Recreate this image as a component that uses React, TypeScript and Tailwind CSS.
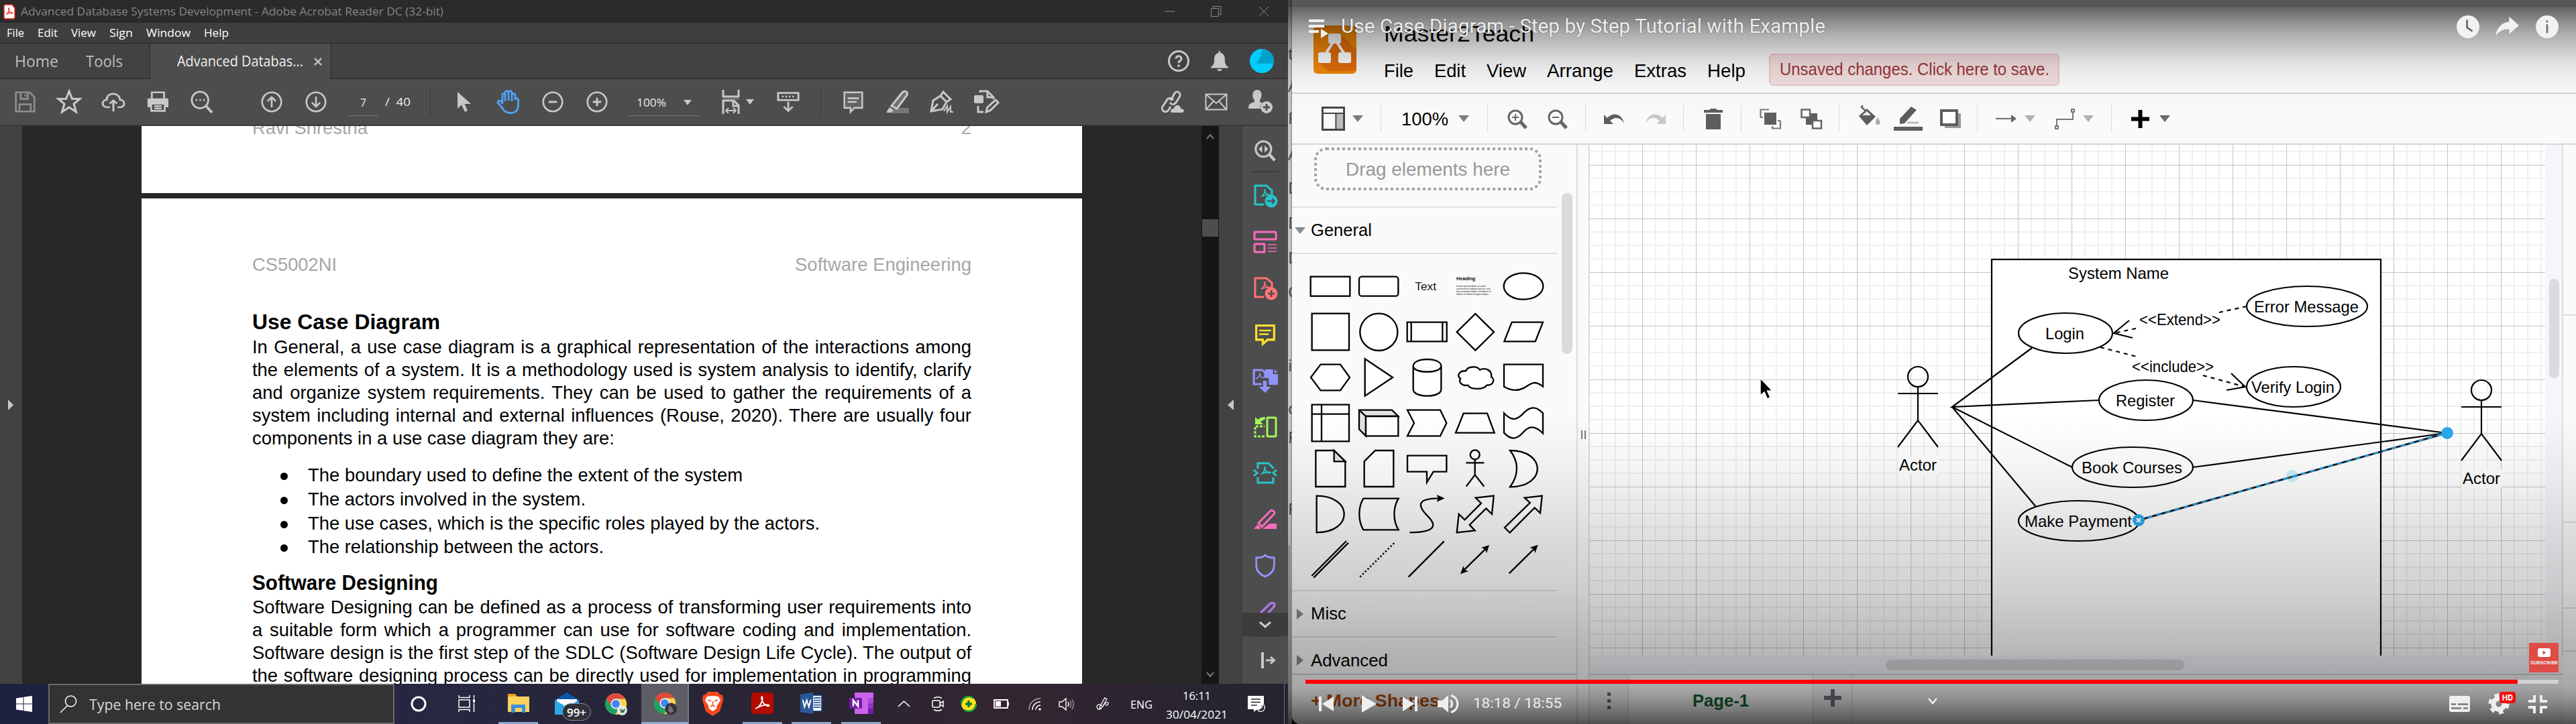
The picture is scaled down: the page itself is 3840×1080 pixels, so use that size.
import React, { useLayoutEffect, useRef, useState } from "react";

/* Text squeezed or stretched horizontally so that it fills a known width. */
function Fit({ w, className = "", children }: { w: number; className?: string; children: string }) {
  const ref = useRef<HTMLSpanElement>(null);
  const [k, setK] = useState(1);
  useLayoutEffect(() => {
    if (ref.current && ref.current.offsetWidth) setK(w / ref.current.getBoundingClientRect().width);
  }, []);
  return (
    <span className={"block shrink-0 " + className} style={{ width: w }}>
      <span ref={ref} className="inline-block origin-left whitespace-nowrap" style={{ transform: `scaleX(${k})` }}>
        {children}
      </span>
    </span>
  );
}

type P = { className?: string; box?: string; children?: React.ReactNode };
const Svg = ({ className = "", box = "0 0 36 36", children }: P) => (
  <svg viewBox={box} className={"block shrink-0 overflow-visible " + className} fill="none" stroke="#c8c8c8" strokeWidth={3} preserveAspectRatio="none">
    {children}
  </svg>
);

const Cell = ({ children }: P) => <div className="flex h-full w-[66px] shrink-0 items-center justify-center">{children}</div>;

/* ------------------------------ Acrobat ------------------------------ */

function TitleBar() {
  return (
    <div className="flex h-[34px] shrink-0 items-center bg-[#2b2b2b] pl-[5px]">
      <Svg className="h-[23px] w-[18px]" box="0 0 18 23">
        <path d="M1 3 Q1 1 3 1 H13 L17 6 V20 Q17 22 15 22 H3 Q1 22 1 20Z" fill="#fff" stroke="#f4281b" strokeWidth="1.4" />
        <path d="M4 16 C7 14 9 9 8.5 6.500 C8 5 7 7 8.500 10 C10 13 13 15 14 13.500 C14 12 8 13 5 15Z" stroke="#f4281b" strokeWidth="1.2" />
      </Svg>
      <Fit w={630} className="ml-2 text-[17px] text-[#868686]">Advanced Database Systems Development - Adobe Acrobat Reader DC (32-bit)</Fit>
      <Svg className="ml-[1075px] h-4 w-4" box="0 0 16 16"><path d="M0 8H15" stroke="#8a8a8a" strokeWidth="1" /></Svg>
      <Svg className="ml-[53px] h-4 w-4" box="0 0 16 16"><path d="M.5 3.500H11.500V15.500H.5ZM3.500 3.500V.5H15V12.500H11.500" stroke="#8a8a8a" strokeWidth="1" /></Svg>
      <Svg className="ml-[55px] h-4 w-4" box="0 0 16 16"><path d="M1 1L15 15M15 1L1 15" stroke="#8a8a8a" strokeWidth="1" /></Svg>
    </div>
  );
}

function MenuBar() {
  return (
    <div className="flex h-[31px] shrink-0 items-center gap-5 border-b border-[#272727] bg-[#3e3e3e] pl-2.5 text-[17px] text-white">
      <Fit w={26}>File</Fit>
      <Fit w={30}>Edit</Fit>
      <Fit w={37}>View</Fit>
      <Fit w={35}>Sign</Fit>
      <Fit w={66}>Window</Fit>
      <Fit w={37}>Help</Fit>
    </div>
  );
}

function TabBar() {
  return (
    <div className="flex h-[53px] shrink-0 bg-[#424242]">
      <div className="flex w-56 shrink-0 items-center border-r border-b border-[#2a2a2a] pl-[22px] text-[23px] text-[#bdbdbd]">
        <Fit w={65}>Home</Fit>
        <Fit w={55} className="ml-[41px]">Tools</Fit>
      </div>
      <div className="flex w-[269px] shrink-0 items-center bg-[#4d4d4d] pl-10 text-[21px] text-[#efefef]">
        <Fit w={188}>Advanced Databas...</Fit>
        <Svg className="ml-[17px] h-2.5 w-2.5" box="0 0 10 10"><path d="M0 0L10 10M10 0L0 10" strokeWidth="2.4" /></Svg>
      </div>
      <div className="flex flex-1 items-center border-b border-l border-[#2a2a2a] pl-[1247px]">
        <Svg className="h-8 w-8" box="0 0 32 32">
          <circle cx="16" cy="16" r="14.500" />
          <path d="M12 12.500C12 7.500 20 7.500 20 12.500C20 16 16 15.500 16 19M16 21.500V25" />
        </Svg>
        <Svg className="ml-8 h-[30px] w-[26px]" box="0 0 26 30">
          <path d="M13 0C11.500 0 11.500 3 11.500 3C6 4 5 9 5 14C5 20 3 22 0 24V25.500H26V24C23 22 21 20 21 14C21 9 20 4 14.500 3C14.500 3 14.500 0 13 0ZM9.500 27H16.500C16 31 10 31 9.500 27Z" fill="#c8c8c8" stroke="none" />
        </Svg>
        <Svg className="ml-8 h-9 w-9">
          <circle cx="18" cy="18" r="18" fill="#00ccff" stroke="none" />
          <path d="M19 0A18 18 0 0 1 35 24C32 20 27 22 11 22C11 16 18 14 17 6Z" fill="#00a0cb" stroke="none" />
        </Svg>
      </div>
    </div>
  );
}

const Caret = ({ className = "" }: P) => <Svg className={"h-2 w-3 " + className} box="0 0 12 8"><path d="M0 0H12L6 8Z" fill="#c8c8c8" stroke="none" /></Svg>;

function AcroToolbar() {
  return (
    <div className="flex h-[70px] shrink-0 items-center border-b-2 border-[#3a3a3a] bg-[#4d4d4d] pl-1 text-[17px] text-[#eeeeee]">
      <Cell><Svg className="h-8 w-8" ><g stroke="#8d8d8d"><path d="M3 2H26L34 10V34H3ZM11 2V13H23V2M19 5V9M9 34V22H28V34" /></g></Svg></Cell>
      <Cell><Svg className="h-9 w-9"><path d="M18 2L22.500 13.500H34L25 21L28.500 33L18 26L7.500 33L11 21L2 13.500H13.500Z" /></Svg></Cell>
      <Cell><Svg className="h-8 w-9"><path d="M13 27H9C0 27 0 15 8 14.500C8 1 27 1 28 14.500C36 15 36 27 28 27H24M18 34V16M12.500 21L18 15.500L23.500 21" strokeWidth="3" /></Svg></Cell>
      <Cell><Svg className="h-8 w-[33px]"><path d="M1 14Q1 12 3 12H33Q35 12 35 14V27H29V21H7V27H1Z" fill="#c8c8c8" stroke="none" /><path d="M8 12V2H28V12M7 21H29V33H7ZM12 25H24M12 29H24" /></Svg></Cell>
      <Cell><Svg className="h-[34px] w-[34px]"><circle cx="15" cy="15" r="13" /><path d="M24 24L34 35" strokeWidth="4" /><path d="M8 15H10.500M14 15H16.500M20 15H22.500" /></Svg></Cell>
      <div className="w-[38px] shrink-0" />
      <Cell><Svg className="h-8 w-8"><circle cx="18" cy="18" r="16" /><path d="M18 27V10M11 17L18 10L25 17" strokeWidth="3" /></Svg></Cell>
      <Cell><Svg className="h-8 w-8"><circle cx="18" cy="18" r="16" /><path d="M18 9V26M11 19L18 26L25 19" strokeWidth="3" /></Svg></Cell>
      <div className="ml-[16px] mt-0.5 flex h-10 w-[43px] items-center justify-center border-b border-[#7a7a7a]"><Fit w={9}>7</Fit></div>
      <Fit w={38} className="ml-[11px]">/&nbsp; 40</Fit>
      <div className="ml-[29px] h-[42px] w-px bg-[#383838]" />
      <div className="w-[17px] shrink-0" />
      <Cell><Svg className="h-[30px] w-5" box="0 0 20 30"><path d="M0 0V25L6 19.500L11 30L15 28L10.500 18H20Z" fill="#c8c8c8" stroke="none" /></Svg></Cell>
      <Cell><Svg className="h-9 w-9"><path d="M9 21V8C9 5 13 5 13 8V17V4C13 1 18 1 18 4V16V4C18 1 23 1 23 4V17V8C23 5 28 5 28 8V15C28 12 32.500 12 32.500 15V24C32 31 28 34.500 21 34.500C14 34.500 11 31 8 26L2 19C2 15 6 15 9 20" stroke="#4da4f7" strokeWidth="2.8" /></Svg></Cell>
      <Cell><Svg className="h-8 w-8"><circle cx="18" cy="18" r="16" /><path d="M11 18H25" strokeWidth="3.4" /></Svg></Cell>
      <Cell><Svg className="h-8 w-8"><circle cx="18" cy="18" r="16" /><path d="M11 18H25M18 11V25" strokeWidth="3.2" /></Svg></Cell>
      <div className="ml-[14px] mt-0.5 flex h-10 w-[105px] items-center border-b border-[#7a7a7a] pl-3">
        <Fit w={44}>100%</Fit>
        <Caret className="ml-[26px]" />
      </div>
      <Svg className="ml-[34px] h-9 w-[26px]" box="0 0 26 36"><path d="M2 0V10H25V0M2 36V16H18L25 23V36M17 16V24H25" /><path d="M2 13H25" stroke="#777" /><path d="M6 31H21M10 27L6 31L10 35M17 27L21 31L17 35" strokeWidth="1.800" /></Svg>
      <Caret className="ml-2.5" />
      <Svg className="ml-[34px] h-8 w-[34px]"><rect x="2" y="3" width="32" height="12" /><path d="M8 9H28" strokeDasharray="2.500 3" /><path d="M18 18V33M11 26L18 33L25 26" strokeWidth="3" /></Svg>
      <div className="ml-[31px] h-[42px] w-px bg-[#383838]" />
      <div className="w-[15px] shrink-0" />
      <Cell><Svg className="h-8 w-[30px]"><path d="M2 2H34V28H20L13 35V28H2Z" fill="#636363" /><path d="M8 12H28M8 18H24" /></Svg></Cell>
      <Cell><Svg className="h-9 w-9"><path d="M14 27H35V35H8Z" fill="#777" stroke="none" /><path d="M9 24L25 4C28 0 34 3 32 8L17 28L9 24Z" fill="#707070" /><path d="M1 34L6 26L12 30L9 34Z" fill="#c8c8c8" stroke="none" /></Svg></Cell>
      <Cell><Svg className="h-9 w-9"><path d="M2 32L5 16L16 9L25 18L19 29ZM2 32L12 21M16 9L20 3L31 14L25 18" /><path d="M21 32L26 24V33L31 25V33H35" strokeWidth="2" /></Svg></Cell>
      <Cell><Svg className="h-9 w-9"><path d="M9 4V2H20L29 11V14M20 2V11H29" /><rect x="0" y="8" width="14" height="12" rx="2" fill="#c8c8c8" stroke="none" /><path d="M6 24V33H14M18 33L20 26L32 15L36 19L24 31Z" /></Svg></Cell>
      <div className="w-[211px] shrink-0" />
      <Cell><Svg className="h-9 w-9"><path d="M16 16L22 5C26 0 33 5 29 11L24 19C21 23 17 22 15 19M20 15C17 11 12 12 10 16L4 25C1 31 9 36 13 30L16 25" strokeWidth="3" /><path d="M16 33C16 28 20 28 21 28C22 21 31 22 31 28C37 28 37 34 33 34H18Z" fill="#c8c8c8" stroke="none" /></Svg></Cell>
      <Cell><Svg className="h-[26px] w-[34px]" box="0 0 34 26"><path d="M1.500 1.500H32.500V24.500H1.500ZM1.500 1.500L17 15L32.500 1.500M1.500 24.500L13 12M32.500 24.500L21 12" strokeWidth="2" /></Svg></Cell>
      <Cell><Svg className="h-9 w-9"><path d="M13 0C22 0 20 13 17 15V18C19 19 21 20 21 20C17 23 17 26 18 28H0C0 20 4 20 9 18V15C5 12 5 0 13 0Z" fill="#c8c8c8" stroke="none" /><circle cx="27" cy="26" r="9" fill="#c8c8c8" stroke="none" /><path d="M22 26H32M27 21V31" stroke="#4d4d4d" /></Svg></Cell>
    </div>
  );
}

const Line = ({ children }: P) => <div className="h-[34px] whitespace-nowrap [text-align-last:justify]">{children}</div>;
const Bullet = ({ w, h, children }: { w: number; h: string; children: string }) => (
  <li className={"flex " + h}>
    <span className="ml-[42px] mt-[13px] h-[11px] w-[11px] rounded-full bg-black" />
    <Fit w={w} className="ml-[30px]">{children}</Fit>
  </li>
);

function Pages() {
  return (
    <div className="flex h-full w-[1402px] flex-col overflow-hidden font-['Liberation_Sans',sans-serif] text-[27.4px] leading-[34px] text-black">
      <div className="h-[100px] shrink-0 overflow-hidden bg-white px-[165px]">
        <div className="mt-[-14.5px] flex justify-between text-[#a6a6a6]">
          <Fit w={172}>Ravi Shrestha</Fit>
          <span>2</span>
        </div>
      </div>
      <div className="mt-2 flex-1 bg-white px-[165px] pt-[82px]">
        <div className="flex justify-between text-[#a6a6a6]">
          <Fit w={126}>CS5002NI</Fit>
          <Fit w={263}>Software Engineering</Fit>
        </div>
        <Fit w={280} className="mt-[52px] text-[31px] font-bold">Use Case Diagram</Fit>
        <div className="mt-[3px] h-[170px]">
          <Line>In General, a use case diagram is a graphical representation of the interactions among</Line>
          <Line>the elements of a system. It is a methodology used is system analysis to identify, clarify</Line>
          <Line>and organize system requirements. They can be used to gather the requirements of a</Line>
          <Line>system including internal and external influences (Rouse, 2020). There are usually four</Line>
          <Fit w={540}>components in a use case diagram they are:</Fit>
        </div>
        <ul className="mt-[21px]">
          <Bullet w={648} h="h-9">The boundary used to define the extent of the system</Bullet>
          <Bullet w={414} h="h-9">The actors involved in the system.</Bullet>
          <Bullet w={763} h="h-[35px]">The use cases, which is the specific roles played by the actors.</Bullet>
          <Bullet w={441} h="h-[34px]">The relationship between the actors.</Bullet>
        </ul>
        <Fit w={277} className="mt-[20px] text-[31px] font-bold">Software Designing</Fit>
        <div className="mt-[2px]">
          <Line>Software Designing can be defined as a process of transforming user requirements into</Line>
          <Line>a suitable form which a programmer can use for software coding and implementation.</Line>
          <Line>Software design is the first step of the SDLC (Software Design Life Cycle). The output of</Line>
          <Line>the software designing process can be directly used for implementation in programming</Line>
        </div>
      </div>
    </div>
  );
}

const Tool = ({ children }: P) => <div className="flex h-[69px] shrink-0 items-center justify-center">{children}</div>;
const pdfGlyph = "M12 19C16 17 18 12 18 9C17 8 16 10 19 14C22 18 26 18 26 17C25 15 17 17 12 19Z";

function ToolPane() {
  return (
    <div className="flex w-[69px] shrink-0 flex-col border-l border-[#3a3a3a] bg-[#4d4d4d]">
      <div className="flex h-[67px] shrink-0 items-center justify-center pt-1.5">
        <Svg className="h-8 w-8"><circle cx="15" cy="15" r="13" strokeWidth="3.500" /><path d="M24 23L34 34" strokeWidth="5" /><path d="M13 9V21L7 15ZM17 9V21L23 15Z" fill="#c8c8c8" stroke="none" /></Svg>
      </div>
      <div className="mx-[13px] h-0.5 shrink-0 bg-[#3d3d3d]" />
      <div className="flex h-[657px] shrink-0 flex-col overflow-hidden">
        <Tool><Svg className="h-9 w-9"><g stroke="#26c5cb" strokeWidth="3"><path d="M16 31H3V3H20L28 10V17" /><path d={pdfGlyph} strokeWidth="1.600" /><circle cx="27" cy="26" r="9.500" fill="#26c5cb" stroke="none" /><path d="M21 26H32M28 22L32 26L28 30" stroke="#4d4d4d" strokeWidth="2" /></g></Svg></Tool>
        <Tool><Svg className="h-9 w-9"><g stroke="#fa6cbb" strokeWidth="3"><rect x="2" y="3" width="32" height="11" rx="1" /><rect x="2" y="21" width="15" height="12" rx="1" /><path d="M22 22H35M22 27H35M22 32H35" strokeWidth="1.600" /></g></Svg></Tool>
        <Tool><Svg className="h-9 w-9"><g stroke="#ff7477" strokeWidth="3"><path d="M16 31H3V3H20L28 10V17" /><path d={pdfGlyph} strokeWidth="1.600" /><circle cx="27" cy="26" r="9.500" fill="#ff7477" stroke="none" /><path d="M22 26H32M27 21V31" stroke="#4d4d4d" strokeWidth="2.500" /></g></Svg></Tool>
        <Tool><Svg className="h-[33px] w-8"><g stroke="#ffde2e" strokeWidth="3.600"><path d="M3 4H33V27H22L14 34V27H3Z" /><path d="M8 12H28M8 18H24" strokeWidth="2.500" /></g></Svg></Tool>
        <Tool><Svg className="h-9 w-[38px]"><g stroke="#9193fb" strokeWidth="3"><path d="M13 23H2V2H14L18 6V13" /><path d="M5 15C9 13 11 9 11 7C10 6 10 9 12 12C14 14 17 14 17 12" strokeWidth="1.400" /><path d="M18 1H29V8H36V24H23V14H18ZM31 1L36 6H31ZM15 18H20V27H26L18 36L9 27H15Z" fill="#9193fb" stroke="none" /></g></Svg></Tool>
        <Tool><Svg className="h-9 w-9"><g stroke="#9ff857" strokeWidth="3"><rect x="21" y="4" width="13" height="28" rx="1" /><path d="M17 32H3V17H17" strokeDasharray="4 2" /><path d="M3 3V14H15L11 10L18 6V3C13 3 10 4 7 7Z" fill="#9ff857" stroke="none" /></g></Svg></Tool>
        <Tool><Svg className="h-9 w-9"><g stroke="#26c5cb" strokeWidth="3"><path d="M7 11V3H23L30 10V11M7 24V32H30V24" /><path d={pdfGlyph} strokeWidth="1.800" /><path d="M1 13L6 17.500L1 22M35 13L30 17.500L35 22" /></g></Svg></Tool>
        <Tool><Svg className="h-9 w-9"><g stroke="#fa6cbb" strokeWidth="3"><path d="M8 23L26 5C29 3 34 7 31 10L13 29Z" /><path d="M14 32L25 24H35V32ZM1 32L7 25L11 31V32Z" fill="#fa6cbb" stroke="none" /></g></Svg></Tool>
        <Tool><Svg className="h-9 w-8"><path d="M18 2C15 5 8 6 3 6V17C3 26 9 31 18 34C27 31 33 26 33 17V6C28 6 21 5 18 2Z" stroke="#9193fb" strokeWidth="3" /></Svg></Tool>
        <Tool><Svg className="h-9 w-9"><path d="M6 24L26 5C29 3 34 6 31 10L14 29" stroke="#b27bee" strokeWidth="3" /></Svg></Tool>
      </div>
      <div className="flex h-[35px] shrink-0 items-center justify-center bg-[#3c3c3c]"><Svg className="h-2.5 w-[18px]" box="0 0 18 10"><path d="M1 1L9 8L17 1" /></Svg></div>
      <div className="mx-[13px] h-px bg-[#3d3d3d]" />
      <div className="flex flex-1 items-center justify-center pl-2"><Svg className="h-6 w-[21px]" box="0 0 21 24"><path d="M2 0V24" strokeWidth="4" /><path d="M7 12H19M14 7L19.500 12L14 17" /></Svg></div>
    </div>
  );
}

function Acrobat() {
  return (
    <div className="flex h-[1020px] flex-col overflow-hidden">
      <TitleBar />
      <MenuBar />
      <TabBar />
      <AcroToolbar />
      <div className="flex min-h-0 flex-1 bg-[#282828]">
        <div className="flex w-[33px] shrink-0 items-center bg-[#424242] pl-3 pt-0"><Svg className="h-4 w-2" box="0 0 8 16"><path d="M0 0L8 8L0 16Z" fill="#c8c8c8" stroke="none" /></Svg></div>
        <div className="w-[178px] shrink-0" />
        <Pages />
        <div className="w-[178px] shrink-0" />
        <div className="flex w-[26px] shrink-0 flex-col items-center bg-[#161616]">
          <Svg className="mt-3 h-2 w-2.5" box="0 0 10 8"><path d="M0 7L5 1L10 7" stroke="#777" strokeWidth="2" /></Svg>
          <div className="mt-[119px] h-[26px] w-6 bg-[#4d4d4d]" />
          <Svg className="mt-auto mb-2.5 h-2 w-2.5" box="0 0 10 8"><path d="M0 1L5 7L10 1" stroke="#777" strokeWidth="2" /></Svg>
        </div>
        <div className="flex w-[34px] shrink-0 items-center justify-center bg-[#424242]"><Svg className="h-4 w-[9px]" box="0 0 9 16"><path d="M9 0L0 8L9 16Z" fill="#c8c8c8" stroke="none" /></Svg></div>
        <ToolPane />
      </div>
    </div>
  );
}

/* ------------------------------ Taskbar ------------------------------ */

const App60 = ({ className = "", open, children }: P & { open?: boolean }) => (
  <div className={"flex h-full w-[59px] shrink-0 items-center justify-center border-b-[3px] " + (open ? "border-[#8fa9cf] " : "border-transparent ") + className}>{children}</div>
);

function Chrome({ children }: P) {
  return (
    <Svg className="h-[34px] w-[34px]">
      <g stroke="none">
        <circle cx="18" cy="18" r="17" fill="#1fa463" />
        <path d="M3 10A17 17 0 0 1 33 10H18L11 21Z" fill="#e04a3f" />
        <path d="M18 10H33A17 17 0 0 1 17 35L25 22Z" fill="#fdd045" />
        <circle cx="18" cy="18" r="8" fill="#fff" />
        <circle cx="18" cy="18" r="6.400" fill="#4285f4" />
        {children}
      </g>
    </Svg>
  );
}

function Taskbar() {
  return (
    <div className="flex h-[60px] items-center bg-[linear-gradient(90deg,#1d2140_0px,#262741_640px,#282537_1000px,#2a2531_1250px,#332530_1500px,#242431_1920px)] font-['Open_Sans',sans-serif] text-white">
      <Svg className="ml-6 h-6 w-6" box="0 0 24 24"><path d="M0 3.500L10.500 2V11.500H0ZM11.500 1.800L24 0V11.500H11.500ZM0 12.500H10.500V22L0 20.500ZM11.500 12.500H24V24L11.500 22.200Z" fill="#fff" stroke="none" /></Svg>
      <div className="ml-6 flex h-full w-[516px] shrink-0 items-center border-2 border-[#6a6a6c] bg-[#333333] pl-4">
        <Svg className="h-[26px] w-6" box="0 0 24 26"><circle cx="15.500" cy="9" r="8" stroke="#fff" strokeWidth="1.500" /><path d="M10.500 15.500L0 26" stroke="#fff" strokeWidth="1.500" /></Svg>
        <Fit w={196} className="ml-[19px] mt-0.5 text-[21.5px] text-[#d8d8d8]">Type here to search</Fit>
      </div>
      <Svg className="ml-6 h-6 w-6" box="0 0 24 24"><circle cx="12" cy="12" r="10" stroke="#fff" strokeWidth="3" /></Svg>
      <Svg className="ml-[47px] h-[26px] w-[26px]" box="0 0 26 26"><g stroke="#fff" strokeWidth="1.500"><rect x="1" y="7" width="16" height="11" /><path d="M1 0V3.500H17V0M1 25V21.500H17V25M23.500 0V5M23.500 12V25" /><path d="M23.500 6V11" strokeWidth="3" /></g></Svg>
      <App60 open className="ml-[34px]"><Svg className="h-7 w-8" box="0 0 32 28"><g stroke="none"><path d="M0 0H11L14 4H32V26H0Z" fill="#e3a413" /><path d="M0 4H32V27H0Z" fill="#fdd35d" /><path d="M5 16H26V28H21V21H11V28H5Z" fill="#3b8fdc" /></g></Svg></App60>
      <div className="relative ml-[25px] h-full w-[54px] shrink-0">
        <Svg className="mt-[13px] h-[33px] w-9" box="0 0 36 33"><g stroke="none"><path d="M0 11L18 0L36 11V18H0Z" fill="#0a57a8" /><path d="M3 10H33V20H3Z" fill="#fff" /><path d="M0 11L18 22L36 11V33H0Z" fill="#28a8ea" /></g></Svg>
        <span className="absolute left-[11px] top-[29px] flex h-[26px] w-[43px] items-center justify-center rounded-full border border-[#8a8a8a] bg-[#303039] text-[17px] font-semibold leading-none">99+</span>
      </div>
      <div className="ml-5"><Chrome><circle cx="28" cy="28" r="8" fill="#e4ebe6" /><path d="M24 25L28 29L27 24L29 28L33 25L31 32H26Z" fill="#3f6b50" /></Chrome></div>
      <div className="ml-[21px] flex h-full w-[71px] shrink-0 items-center justify-center border-r-2 border-b-[3px] border-r-[#777985] border-b-[#8fa9cf] bg-[#5c5d65]"><Chrome><circle cx="28" cy="27" r="9.500" fill="#35323a" /><path d="M25 21L29 24L32 31L27 34L23 30Z" fill="#77706f" /></Chrome></div>
      <Svg className="ml-5 h-9 w-[31px]" box="0 0 31 36"><path d="M8 0H23L26 4L30 5L31 12L26 29L15.500 36L5 29L0 12L1 5L5 4Z" fill="#f9481c" stroke="none" /><path d="M15.500 6L24 7L27 13L22 20L21 25L15.500 29L10 25L9 20L4 13L7 7Z" fill="#fff" stroke="none" /><path d="M8 12L13 14M23 12L18 14M15.500 14V20L12 22M15.500 20L19 22" stroke="#f9481c" strokeWidth="1.500" /></Svg>
      <App60 open className="ml-[29px]"><Svg className="h-8 w-[33px]"><rect width="36" height="36" rx="5" fill="#b30b00" stroke="none" /><path d="M7 27C13 25 19 15 18 8C17 5 15 9 18 15C21 21 28 25 29 22C29 19 16 21 9 26Z" stroke="#fff" strokeWidth="2" /></Svg></App60>
      <App60 open className="ml-3.5"><Svg className="h-8 w-[33px]"><g stroke="none"><path d="M18 5H35V31H18Z" fill="#fff" /><path d="M0 3L21 0V36L0 33Z" fill="#2b579a" /></g><path d="M22 9H33M22 13H33M22 17H33M22 21H33M22 25H33" stroke="#2b579a" strokeWidth="2" /><path d="M18 5H34.500V31H18" stroke="#2b579a" strokeWidth="1.500" /><path d="M4 12L7 24L10.500 13L14 24L17 12" stroke="#fff" strokeWidth="2.200" /></Svg></App60>
      <App60 open className="ml-[15px]"><Svg className="h-8 w-9"><g stroke="none"><path d="M8 0H36V36H8Z" fill="#ca64ea" /><path d="M28 9H36V18H28Z" fill="#ae4bd5" /><path d="M28 18H36V27H28Z" fill="#9332bf" /><path d="M28 27H36V36H28Z" fill="#7719aa" /><rect y="9" width="19" height="18" rx="1" fill="#7719aa" /></g><path d="M6 23V13L13 23V13" stroke="#fff" strokeWidth="2.500" /></Svg></App60>
      <Svg className="ml-[25px] h-2.5 w-[19px]" box="0 0 19 10"><path d="M1 9L9.500 1L18 9" stroke="#fff" strokeWidth="1.600" /></Svg>
      <Svg className="ml-8 h-[22px] w-[18px]" box="0 0 18 22"><g stroke="#fff" strokeWidth="1.500"><rect x="1" y="6" width="11" height="10" rx="1.500" /><path d="M12 10L17 7V15L12 12M3 2.500Q9 -1 15 2.500M3 19.500Q9 23 15 19.500" /></g></Svg>
      <Svg className="ml-6 h-6 w-[26px]" box="0 0 26 24"><circle cx="13" cy="12" r="11" fill="#ffe11a" stroke="#149a3c" strokeWidth="2.500" strokeDasharray="24 11" /><path d="M13 7V17M8 12H18" stroke="#0b7a2d" strokeWidth="3.500" /></Svg>
      <Svg className="ml-6 h-3.5 w-[24px]" box="0 0 24 14"><path d="M1 1H21V13H1ZM22 4V10" stroke="#fff" strokeWidth="1.800" /><path d="M3 3H11V11H3Z" fill="#fff" stroke="none" /></Svg>
      <Svg className="ml-7 h-[19px] w-[19px]" box="0 0 19 19"><g stroke="#fff" strokeWidth="1.500"><path d="M1 18C1 8 8 1 18 1" opacity=".6" /><path d="M6 18C6 11 11 6 18 6M11 18C11 14 14 11 18 11" /></g><circle cx="17" cy="17" r="1.800" fill="#fff" stroke="none" /></Svg>
      <Svg className="ml-[26px] h-[19px] w-6" box="0 0 24 19"><g stroke="#fff" strokeWidth="1.400"><path d="M1 6H5L11 1V18L5 13H1ZM14 6Q16 9.500 14 13" /><path d="M17 4Q20 9.500 17 15M20 2Q24.500 9.500 20 17" opacity=".5" /></g></Svg>
      <Svg className="ml-8 h-5 w-5" box="0 0 20 20"><path d="M6 13L13 1L16 3L9 15L5 18L6 13M9 13C3 8 0 13 2 17C5 20 9 16 11 12C14 8 19 6 18 10C17 13 14 12 14 11" stroke="#fff" strokeWidth="1.300" /></Svg>
      <Fit w={33} className="ml-[31px] mt-0.5 text-[17px]">ENG</Fit>
      <div className="ml-5 mt-1 flex w-[92px] shrink-0 flex-col items-center text-[17px] leading-7">
        <Fit w={42}>16:11</Fit>
        <Fit w={92}>30/04/2021</Fit>
      </div>
      <Svg className="ml-[30px] h-6 w-[25px]" box="0 0 25 24"><path d="M0 0H24V12A6 6 0 0 0 20 20H14L9 24V20H0Z" fill="#fff" stroke="none" /><path d="M5 5H19M5 9.500H19M5 14H14" stroke="#272430" strokeWidth="1.600" /><path d="M22 12A6 6 0 1 1 14 20A7 7 0 0 0 22 12Z" fill="#272430" stroke="#fff" strokeWidth="1.300" /></Svg>
      <div className="ml-[29px] h-full w-px bg-[#6f6d78]" />
    </div>
  );
}

/* ------------------------------ draw.io ------------------------------ */

const Down = ({ className = "", color = "#7d7d7d" }: P & { color?: string }) => <Svg className={"h-2.5 w-4 " + className} box="0 0 16 10"><path d="M0 0H16L8 10Z" fill={color} stroke="none" /></Svg>;
const Sep = ({ className = "" }: P) => <div className={"h-10 w-px shrink-0 bg-[#dadada] " + className} />;

function DrawHeader() {
  return (
    <div className="flex h-[140px] shrink-0 border-b-2 border-[#d2d3d8] bg-[#fafafa] pl-8 text-black">
      <Svg className="mt-[38px] h-[72px] w-16" box="0 0 64 72">
        <g stroke="none"><rect width="64" height="72" rx="6" fill="#f08705" /><path d="M38 10L64 36V66Q64 68 60 68H22L8 56L22 30Z" fill="#df6c0c" /></g>
        <path d="M31 22L17 44M33 22L47 44" stroke="#fff" strokeWidth="4" />
        <g fill="#fff" stroke="none"><rect x="22" y="12" width="19" height="15" rx="3" /><rect x="7" y="40" width="19" height="16" rx="3" /><rect x="37" y="40" width="19" height="16" rx="3" /></g>
      </Svg>
      <div className="ml-[41px] pt-[30px]">
        <Fit w={224} className="h-10 text-[34px] leading-10">Master2Teach</Fit>
        <div className="mt-2.5 flex h-12 items-center gap-[31px] text-[28px]">
          <Fit w={44} className="pt-1">File</Fit>
          <Fit w={47} className="pt-1">Edit</Fit>
          <Fit w={59} className="pt-1">View</Fit>
          <Fit w={99} className="pt-1">Arrange</Fit>
          <Fit w={78} className="pt-1">Extras</Fit>
          <Fit w={57} className="pt-1">Help</Fit>
          <div className="ml-1 flex h-12 w-[433px] items-center rounded-md border-2 border-[#eec5cc] bg-[#f2dede] pl-3.5 text-[25px] text-[#983638]">
            <Fit w={402}>Unsaved changes. Click here to save.</Fit>
          </div>
        </div>
      </div>
    </div>
  );
}

function DrawToolbar() {
  return (
    <div className="flex h-[76px] shrink-0 items-center border-b-2 border-[#d5d6dc] bg-[#fafafa]">
      <Svg className="ml-11 h-9 w-[35px]"><g stroke="#444"><path d="M22 11H34V34H22Z" fill="#bbb" stroke="none" /><rect x="1.500" y="1.500" width="33" height="33" /><path d="M1.500 10H34.500M22 10V34" strokeWidth="2" /></g></Svg>
      <Down className="ml-[11px]" />
      <Sep className="ml-[26px]" />
      <Fit w={70} className="ml-[30px] mt-0.5 text-[27px] text-black">100%</Fit>
      <Down className="ml-[15px]" />
      <Sep className="ml-[27px]" />
      <Svg className="ml-[29px] h-[29px] w-[30px]" box="0 0 30 29"><g stroke="#666"><circle cx="12" cy="12" r="10" /><path d="M19 18L28 28" strokeWidth="5" /><path d="M7 12H17M12 7V17" strokeWidth="2" /></g></Svg>
      <Svg className="ml-[30px] h-[29px] w-[30px]" box="0 0 30 29"><g stroke="#666"><circle cx="12" cy="12" r="10" /><path d="M19 18L28 28" strokeWidth="5" /><path d="M7 12H17" strokeWidth="2" /></g></Svg>
      <Sep className="ml-[26px]" />
      <Svg className="ml-[27px] h-[15px] w-[31px]" box="0 0 31 15"><path d="M0 1V15H14L9 10C18 3 25 6 30 14C27 0 14 -4 5 6Z" fill="#5e5e5e" stroke="none" /></Svg>
      <Svg className="ml-[30px] h-[15px] w-[31px]" box="0 0 31 15"><path d="M31 1V15H17L22 10C13 3 6 6 1 14C4 0 17 -4 26 6Z" fill="#c8c8c8" stroke="none" /></Svg>
      <Sep className="ml-[26px]" />
      <Svg className="ml-[30px] h-[31px] w-7" box="0 0 28 31"><path d="M0 2H8L10 0H18L20 2H28V6H0ZM3 8H25V31H3Z" fill="#5e5e5e" stroke="none" /></Svg>
      <Sep className="ml-[27px]" />
      <Svg className="ml-[27px] h-[31px] w-8" box="0 0 32 31"><path d="M7 6H25V24H7Z" fill="#5e5e5e" stroke="none" /><path d="M14 1.500H1.500V13H5M31 18V29.500H19V26M31 18H27" stroke="#777" strokeWidth="2.200" /></Svg>
      <Svg className="ml-[29px] h-[31px] w-8" box="0 0 32 31"><path d="M8 7H25V24H8Z" fill="#5e5e5e" stroke="none" /><path d="M1.500 1.500H14V13H1.500ZM18 18H31V29.500H18Z" fill="#fff" stroke="#666" strokeWidth="2.500" /></Svg>
      <Sep className="ml-[25px]" />
      <Svg className="ml-[29px] -mt-2 h-7 w-8" box="0 0 32 28"><path d="M0 14L12 3L25 15L12 28Z" fill="#5e5e5e" stroke="none" /><path d="M5 -2V3M3 0L13 9" stroke="#666" strokeWidth="2.500" /><path d="M5 13L12 7L18 13Z" fill="#eee" stroke="none" /><path d="M28 16C34 25 31 27 28 27C25 27 23 24 28 16Z" fill="#aaa" stroke="none" /></Svg>
      <Svg className="ml-5 h-9 w-[43px]" box="0 0 43 36"><path d="M0 30H43V36H0Z" fill="#5e5e5e" stroke="none" /><path d="M9 26V18L26 0L34 5L16 25Z" fill="#5e5e5e" stroke="none" /><path d="M20 24H37" stroke="#bbb" /></Svg>
      <Svg className="ml-[26px] h-7 w-[31px]" box="0 0 31 28"><path d="M7 6H31V28H7Z" fill="#999" stroke="none" /><path d="M2 2H25V23H2Z" fill="#fff" stroke="#5e5e5e" strokeWidth="4" /></Svg>
      <Sep className="ml-6" />
      <Svg className="ml-[27px] h-3 w-[31px]" box="0 0 31 12"><path d="M0 6H26" stroke="#777" strokeWidth="2.200" /><path d="M23 0L31 6L23 12Z" fill="#666" stroke="none" /></Svg>
      <Down className="ml-3" color="#b0b0b0" />
      <Svg className="ml-[29px] h-[31px] w-[30px]" box="0 0 30 31"><g stroke="#777" strokeWidth="2"><rect x="1" y="26" width="4" height="4" /><rect x="25" y="1" width="4" height="4" /><path d="M3 26V16H27V5" /></g></Svg>
      <Down className="ml-3" color="#b0b0b0" />
      <Sep className="ml-[26px]" />
      <Svg className="ml-[29px] h-[27px] w-[27px]" box="0 0 27 27"><path d="M0 13.500H27M13.500 0V27" stroke="#000" strokeWidth="6" /></Svg>
      <Down className="ml-[15px]" color="#6b6b6b" />
    </div>
  );
}

/* Palette shapes share one coordinate system; each cell shows its own 216 x 204 window of it. */
const shapes: React.ReactNode[] = [
  <rect x="100" y="97" width="176" height="87" />,
  <rect x="317" y="97" width="175" height="87" rx="12" />,
  <text x="567" y="159" fontSize="52" textLength="95" lengthAdjust="spacingAndGlyphs" fill="#111" stroke="none">Text</text>,
  <g stroke="none" fill="#111"><text x="752" y="114" fontSize="22" textLength="85" fontWeight="bold">Heading</text>
    <text x="752" y="144" fontSize="11" textLength="134">Lorem ipsum dolor sit amet,</text><text x="752" y="156" fontSize="11" textLength="151">consectetur adipisicing elit, sed</text>
    <text x="752" y="168" fontSize="11" textLength="155">do eiusmod tempor incididunt ut</text><text x="752" y="180" fontSize="11" textLength="146">labore et dolore magna aliqua.</text></g>,
  <ellipse cx="1052" cy="140" rx="88" ry="59" />,
  <rect x="106" y="262" width="166" height="164" />,
  <ellipse cx="405" cy="345" rx="84" ry="83" />,
  <path d="M532 301H709V387H532ZM550 301V387M690 301V387" />,
  <path d="M837 263L920 345L837 427L754 345Z" />,
  <path d="M1000 301H1139L1105 387H966Z" />,
  <path d="M145 490H233L275 548L233 606H145L101 548Z" />,
  <path d="M343 465L467 548L343 631Z" />,
  <path d="M559 497C559 457 684 457 684 497V601C684 641 559 641 559 601ZM559 497C559 532 684 532 684 497" />,
  <path d="M795 519C800 498 845 495 857 514C880 502 913 515 908 546C925 555 920 583 888 583C875 604 815 604 804 583C780 588 760 572 770 553C752 540 765 517 795 519Z" />,
  <path d="M965 490H1139V589C1095 555 1085 580 1050 597C1020 611 990 604 965 589Z" />,
  <path d="M106 670H272V834H106ZM149 670V834M106 712H272" />,
  <g><path d="M317 694H464L492 722H347V810L317 780Z" fill="#e2e2e2" /><path d="M317 694L347 722V810H492V722H347" /></g>,
  <path d="M533 694H680L708 752L680 810H533L563 752Z" />,
  <path d="M784 709H890L922 796H749Z" />,
  <path d="M965 708C1000 746 1025 740 1055 705C1085 675 1110 678 1139 708V798C1100 760 1075 766 1050 795C1020 828 995 828 965 796Z" />,
  <g><path d="M123 875H205L255 924V1037H123Z" /><path d="M205 875V924H255Z" fill="#e2e2e2" /></g>,
  <path d="M389 875H471V1037H340V924Z" />,
  <path d="M533 898H708V970H649L620 1018V970H533Z" />,
  <g><circle cx="835" cy="894" r="21" /><path d="M835 915V984M795 930H876M796 1036L835 984L876 1036" /></g>,
  <path d="M992 875C1155 875 1155 1038 992 1038C1032 985 1032 925 992 875Z" />,
  <path d="M127 1078C291 1078 291 1242 127 1242Z" />,
  <path d="M336 1090H493C468 1130 468 1190 493 1230H336C312 1190 312 1130 336 1090Z" />,
  <g><path d="M543 1242C660 1242 665 1210 625 1170C570 1115 585 1090 670 1089" fill="none" /><path d="M664 1073L700 1089L664 1105L670 1089Z" fill="#000" stroke="none" /></g>,
  <path d="M919 1078L911 1160L885 1134L811 1208L835 1233L754 1242L763 1160L789 1185L863 1111L838 1087Z" />,
  <path d="M1135 1078L1127 1155L1102 1131L991 1243L968 1220L1081 1109L1057 1087Z" />,
  <path d="M105 1436L260 1280M114 1444L269 1288" />,
  <path d="M321 1441L478 1285" strokeDasharray="7 9" strokeWidth="8" />,
  <path d="M538 1441L697 1281" />,
  <g><path d="M780 1416L889 1309" /><path d="M770 1428L783 1392L789 1409L806 1415ZM899 1298L887 1334L880 1317L863 1310Z" fill="#000" stroke="none" /></g>,
  <g><path d="M988 1425L1106 1309" /><path d="M1117 1297L1104 1334L1098 1316L1080 1310Z" fill="#000" stroke="none" /></g>,
];

function Palette() {
  return (
    <div className="grid w-[360px] shrink-0 grid-cols-5 font-['Liberation_Sans',sans-serif]">
      {shapes.map((s, i) => (
        <svg key={i} viewBox={`${80 + 216 * (i % 5)} ${38 + 204 * Math.floor(i / 5)} 216 204`} className="block h-[68px] w-[72px] overflow-visible" fill="#fff" stroke="#000" strokeWidth={7}>{s}</svg>
      ))}
    </div>
  );
}

function Sidebar() {
  return (
    <div className="flex w-[426px] shrink-0 flex-col border-r-2 border-[#dcdcdf] bg-[#fafafa] text-[25.5px] text-black">
      <div className="flex h-[789px] shrink-0">
        <div className="flex w-[395px] flex-col">
          <div className="relative ml-[33px] mt-1 flex h-16 w-[339px] shrink-0 items-center justify-center pt-0.5 text-[28px] text-[#989898]">
            <Svg className="absolute inset-0 h-full w-full" box="0 0 339 64"><rect x="2" y="2" width="335" height="60" rx="16" stroke="#a3a3a3" strokeWidth="4" strokeDasharray="4 4" /></Svg>
            <Fit w={245}>Drag elements here</Fit>
          </div>
          <div className="mt-6 flex h-[71px] shrink-0 items-center border-y-2 border-[#dfdfdf] pl-1"><Down color="#8a8a8a" /><Fit w={91} className="ml-2">General</Fit></div>
          <div className="h-[501px] shrink-0 pl-[21px] pt-[14px]"><Palette /></div>
          <div className="flex h-[71px] shrink-0 items-center border-y-2 border-[#dfdfdf] pl-[7px]"><Svg className="h-4 w-2.5" box="0 0 10 16"><path d="M0 0L10 8L0 16Z" fill="#8a8a8a" stroke="none" /></Svg><Fit w={53} className="ml-[11px]">Misc</Fit></div>
          <div className="flex flex-1 items-center pl-[7px] pt-3.5"><Svg className="h-4 w-2.5" box="0 0 10 16"><path d="M0 0L10 8L0 16Z" fill="#8a8a8a" stroke="none" /></Svg><Fit w={115} className="ml-[11px]">Advanced</Fit></div>
        </div>
        <div className="ml-[7px] mt-[72px] h-60 w-4 rounded-full bg-[#dbdbdb]" />
      </div>
      <div className="flex flex-1 items-center border-t-2 border-[#cfcfd2] pt-1 pl-7 text-[25px] font-bold text-[#b85010]"><Fit w={192}>+ More Shapes</Fit></div>
    </div>
  );
}

/* The free canvas: x and y are those of the whole desktop, so the viewBox starts at the canvas corner. */
function Canvas() {
  const label = (x: number, y: number, w: number, t: string) => <text x={x} y={y} textLength={w} lengthAdjust="spacingAndGlyphs" fontSize="24" fill="#000" stroke="none">{t}</text>;
  const oval = (cx: number, cy: number, rx: number) => <ellipse cx={cx} cy={cy} rx={rx} ry={30} fill="#fff" />;
  const actor = (x: number, y: number) => <path d={`M${x} ${y + 15}V${y + 65}M${x - 30} ${y + 25}H${x + 30}M${x - 30} ${y + 105}L${x} ${y + 65}L${x + 30} ${y + 105}M${x - 15} ${y}a15 15 0 1 0 30 0a15 15 0 1 0 -30 0`} />;
  return (
    <svg viewBox="2370 216 1424 762" className="block h-[762px] w-[1424px] shrink-0 bg-white font-['Liberation_Sans',sans-serif]" fill="none" stroke="#000" strokeWidth={2.2}>
      <defs>
        <pattern id="grid" x="2448" y="246" width="80" height="80" patternUnits="userSpaceOnUse">
          <path d="M20 0V80M40 0V80M60 0V80M0 20H80M0 40H80M0 60H80" stroke="#f0f0f0" strokeWidth="2" />
          <path d="M.5 0V80M0 .5H80" stroke="#c4c4c4" strokeWidth="1" />
        </pattern>
      </defs>
      <rect x="2370" y="216" width="1424" height="762" fill="url(#grid)" stroke="none" />
      <rect x="2969" y="387" width="580" height="620" fill="#fff" />
      {label(3083, 416, 150, "System Name")}
      <rect x="2829" y="681" width="60" height="27" fill="#fff" stroke="none" />
      <rect x="3669" y="701" width="60" height="27" fill="#fff" stroke="none" />
      <path d="M3029 519L2910 607L3129 597M2910 607L3089 697M2910 607L3035 756M3269 597L3647 646L3269 697" />
      {oval(3079, 497, 70)}{oval(3439, 457, 90)}{oval(3419, 577, 70)}{oval(3199, 597, 70)}{oval(3179, 697, 90)}{oval(3099, 777, 90)}
      <path d="M3349 457L3308 466M3184 490L3151 497M3131 518L3189 533M3284 560L3347 577" strokeDasharray="6 6" />
      <path d="M3174 478L3151 497L3179 504M3326 557L3347 577L3319 582" />
      {label(3049, 506, 58, "Login")}{label(3360, 466, 156, "Error Message")}{label(3356, 586, 124, "Verify Login")}{label(3154, 606, 88, "Register")}
      {label(3103, 706, 150, "Book Courses")}{label(3018, 786, 160, "Make Payment")}{label(3189, 485, 121, "<<Extend>>")}{label(3178, 555, 122, "<<include>>")}
      {label(2831, 702, 56, "Actor")}{label(3671, 722, 56, "Actor")}
      {actor(2859, 562)}{actor(3699, 582)}
      <path d="M3188 776L3647 646" stroke="#10202c" strokeWidth="3" />
      <path d="M3188 776L3647 646" stroke="#2f9bd8" strokeDasharray="7 7" strokeWidth="3" />
      <circle cx="3417" cy="710" r="9" fill="#29b6f2" opacity=".25" stroke="none" />
      <circle cx="3648" cy="646" r="9" fill="#29a9ec" stroke="none" />
      <circle cx="3188" cy="776" r="9" fill="#29a9ec" stroke="none" />
      <path d="M3185 773L3191 779M3191 773L3185 779" stroke="#fff" />
      <path d="M2624 564V590L2630 585L2634.500 595L2639 593L2634.500 583H2642Z" fill="#000" stroke="#fff" strokeWidth="1.500" />
    </svg>
  );
}

function DrawIo() {
  return (
    <div className="flex h-full w-[1914px] shrink-0 flex-col overflow-hidden rounded-bl-xl bg-[#fafafa] font-['Liberation_Sans',sans-serif]">
      <DrawHeader />
      <DrawToolbar />
      <div className="flex min-h-0 flex-1">
        <Sidebar />
        <div className="flex w-[18px] shrink-0 items-start justify-center gap-[3px] border-r-2 border-[#dcdcdf] pt-[426px]">
          <div className="h-[13px] w-0.5 bg-[#777]" /><div className="h-[13px] w-0.5 bg-[#777]" />
        </div>
        <div className="flex w-[1451px] shrink-0 flex-col">
          <div className="flex h-[762px] shrink-0">
            <Canvas />
            <div className="w-[27px] shrink-0 border-r-2 border-[#dcdce0] bg-[#f5f6f9] pl-1.5 pt-[200px]"><div className="h-[148px] w-[15px] rounded-full bg-[#dadbde]" /></div>
          </div>
          <div className="h-[27px] shrink-0 bg-[#f4f6fa] pl-[441px] pt-1.5"><div className="h-4 w-[445px] rounded-full bg-[#d8dadd]" /></div>
          <div className="flex min-h-0 flex-1 border-t-2 border-[#cfcfd4] bg-[#f2f4f7] pb-0">
            <div className="flex w-[58px] shrink-0 flex-col items-center gap-[5px] border-r border-[#d0d2d6] pt-[26px]"><i className="h-[5px] w-[5px] bg-[#6a6a6a]" /><i className="h-[5px] w-[5px] bg-[#6a6a6a]" /><i className="h-[5px] w-[5px] bg-[#6a6a6a]" /></div>
            <div className="flex w-[275px] shrink-0 items-center justify-center border-r border-[#d0d2d6] bg-[#fdfdfd] pt-1 text-[25px] font-bold text-[#136430]"><Fit w={84}>Page-1</Fit></div>
            <div className="flex w-[58px] shrink-0 justify-center border-r border-[#d0d2d6] pt-[21px]"><Svg className="h-[26px] w-[26px]" box="0 0 26 26"><path d="M0 13H26M13 0V26" stroke="#707478" strokeWidth="6" /></Svg></div>
          </div>
        </div>
        <div className="flex-1 pt-[253px]"><div className="h-[311px] border-y-2 border-[#dcdce0]" /><div className="mt-[126px] h-[66px] border-y-2 border-[#dcdce0]" /></div>
      </div>
    </div>
  );
}

/* Edge of a page left visible behind the diagram editor. */
function Sliver() {
  return (
    <div className="flex w-1.5 shrink-0 flex-col overflow-hidden bg-[linear-gradient(90deg,#c9c9c9,#c2c2c2_60%,#8e8e8e)] pt-[66px] text-[24px] leading-7 text-[#4a4a4a]">
      <b className="h-12 shrink-0 font-normal">t</b>
      <b className="h-12 shrink-0 font-normal">A</b>
      <b className="h-[54px] shrink-0 font-normal">P</b>
      <b className="h-[50px] shrink-0 font-normal">A</b>
      <b className="h-[52px] shrink-0 font-normal">D</b>
      <b className="h-[52px] shrink-0 font-normal">D</b>
      <b className="h-[51px] shrink-0 font-normal">D</b>
      <b className="h-[110px] shrink-0 font-normal">C</b>
      <b className="h-[64px] shrink-0 font-normal">i</b>
      <b className="h-[43px] shrink-0 font-normal">c</b>
      <b className="h-[107px] shrink-0 font-normal">F</b>
      <b className="h-[68px] shrink-0 font-normal">F</b>
      <div className="flex-1 bg-[#a8a8a8]" />
    </div>
  );
}

function PlayerOverlay() {
  return (
    <div className="absolute inset-0 flex flex-col font-['Roboto',sans-serif] text-[#eeeeee]">
      <div className="flex h-[180px] shrink-0 items-start bg-[linear-gradient(180deg,rgba(0,0,0,.65)_0px,rgba(0,0,0,.65)_8px,rgba(0,0,0,.69)_9px,rgba(0,0,0,.61)_10px,rgba(0,0,0,.45)_30px,rgba(0,0,0,.31)_50px,rgba(0,0,0,.16)_80px,rgba(0,0,0,.08)_100px,rgba(0,0,0,.025)_130px,transparent_180px)]">
        <Svg className="ml-[31px] mt-[29px] h-7 w-[29px]" box="0 0 29 28"><path d="M0 0H23V4H0ZM0 8H23V12H0ZM0 16H15V20H0ZM18 14L29 21L18 28Z" fill="#f0f0f0" stroke="none" /></Svg>
        <Fit w={722} className="ml-[19px] mt-[21px] text-[30px] leading-9 [text-shadow:0_0_2px_rgba(0,0,0,.5)]">Use Case Diagram - Step by Step Tutorial with Example</Fit>
        <Svg className="ml-[941px] mt-[23px] h-[34px] w-[34px]"><circle cx="18" cy="18" r="18" fill="#f2f2f2" stroke="none" /><path d="M16.500 7V19L25 25" stroke="#6e6e6e" strokeWidth="3" /></Svg>
        <Svg className="ml-6 mt-[25px] h-[29px] w-[35px]"><path d="M21 0L36 16L21 32V23C11 23 5 27 0 36C2 22 8 11 21 9Z" fill="#f2f2f2" stroke="none" /></Svg>
        <Svg className="ml-[25px] mt-[23px] h-[34px] w-[34px]"><circle cx="18" cy="18" r="18" fill="#f2f2f2" stroke="none" /><path d="M18 8V11M18 14V28" stroke="#757575" strokeWidth="3" /></Svg>
      </div>
      <div className="flex-1" />
      <div className="flex h-[460px] shrink-0 flex-col bg-[linear-gradient(180deg,transparent_0px,rgba(0,0,0,.05)_90px,rgba(0,0,0,.12)_180px,rgba(0,0,0,.18)_260px,rgba(0,0,0,.28)_350px,rgba(0,0,0,.33)_405px,rgba(0,0,0,.43)_425px,rgba(0,0,0,.55)_443px,rgba(0,0,0,.67)_460px)] pl-[26px]">
        <div className="ml-[1824px] mt-[339px] flex h-11 w-11 shrink-0 flex-col items-center bg-[#df4b45] pt-2">
          <Svg className="h-[13px] w-[19px]" box="0 0 19 13"><rect width="19" height="13" rx="3" fill="#fff" stroke="none" /><path d="M7.500 3.500L12.500 6.500L7.500 9.500Z" fill="#df4b45" stroke="none" /></Svg>
          <Fit w={41} className="mt-1 text-[8px] font-bold leading-[10px]">SUBSCRIBE</Fit>
        </div>
        <div className="mt-[11px] flex h-[6px] w-[1868px] shrink-0 bg-[#cfd0d1]"><div className="w-[1807px] bg-[#ff0000]" /></div>
        <div className="flex h-[60px] w-[1868px] shrink-0 items-center pl-5">
          <Svg className="h-[22px] w-[22px]" box="0 0 22 22"><path d="M0 0H4V22H0ZM22 0V22L5 11Z" fill="#eee" stroke="none" /></Svg>
          <Svg className="ml-[42px] h-[26px] w-[22px]" box="0 0 22 26"><path d="M0 0L22 13L0 26Z" fill="#eee" stroke="none" /></Svg>
          <Svg className="ml-[39px] h-[22px] w-[22px]" box="0 0 22 22"><path d="M18 0H22V22H18ZM0 0V22L17 11Z" fill="#eee" stroke="none" /></Svg>
          <Svg className="ml-[30px] h-[30px] w-8" box="0 0 32 30"><path d="M0 10H7L16 2V28L7 20H0Z" fill="#eee" stroke="none" /><path d="M19 9.500Q24 15 19 20.500M20 2.500C33 6 33 24 20 27.500" stroke="#eee" strokeWidth="3.200" /></Svg>
          <Fit w={132} className="ml-[21px] text-[21px]">18:18 / 18:55</Fit>
          <Svg className="ml-[547px] -mt-2 h-2 w-3" box="0 0 12 8"><path d="M0 0L6 7L12 0" stroke="#eee" strokeWidth="2.500" /></Svg>
          <Svg className="ml-[764px] h-[24px] w-[31px]" box="0 0 31 24"><rect width="31" height="24" rx="3" fill="#eee" stroke="none" /><path d="M3 12.500H10M13 12.500H28M3 18.500H18M21 18.500H28" stroke="#777" strokeWidth="2.600" /></Svg>
          <div className="relative ml-[27px]">
            <Svg className="h-8 w-8"><circle cx="18" cy="18" r="9" stroke="#eee" strokeWidth="8" /><circle cx="18" cy="18" r="15" stroke="#eee" strokeWidth="5" strokeDasharray="7.850 7.850" /></Svg>
            <span className="absolute -top-0.5 left-[17px] flex h-[17px] w-6 items-center justify-center rounded-sm bg-[#f20d0d] text-[12px] font-bold leading-none text-white">HD</span>
          </div>
          <Svg className="ml-7 h-[27px] w-[28px]" box="0 0 28 27"><path d="M0 9H9V0M19 0V9H28M0 18H9V27M19 27V18H28" stroke="#eee" strokeWidth="4" /></Svg>
        </div>
      </div>
    </div>
  );
}

export default function App() {
  return (
    <div className="flex h-[1080px] w-[3840px] overflow-hidden bg-black">
      <div className="flex w-[1920px] shrink-0 flex-col font-['Open_Sans',sans-serif]">
        <Acrobat />
        <Taskbar />
      </div>
      <div className="relative flex w-[1920px] shrink-0 overflow-hidden">
        <Sliver />
        <DrawIo />
        <PlayerOverlay />
      </div>
    </div>
  );
}
